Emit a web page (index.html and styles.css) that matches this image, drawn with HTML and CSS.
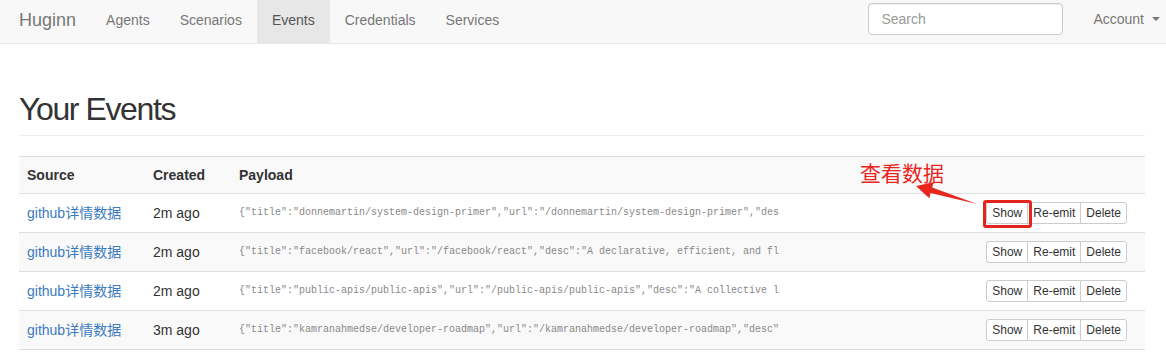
FILE: index.html
```html
<!DOCTYPE html>
<html lang="en">
<head>
    <meta charset="UTF-8">
    <meta name="viewport" content="width=device-width, initial-scale=1.0">
    <title>Huginn - Your Events</title>
    <link rel="stylesheet" href="styles.css">
</head>
<body>

<nav class="navbar">
    <a href="#" class="brand">Huginn</a>
    <ul class="nav-links">
        <li><a href="#">Agents</a></li>
        <li><a href="#">Scenarios</a></li>
        <li class="active"><a href="#">Events</a></li>
        <li><a href="#">Credentials</a></li>
        <li><a href="#">Services</a></li>
    </ul>
    <form class="search-form">
        <input type="text" class="search-input" placeholder="Search">
    </form>
    <a href="#" class="account">Account <span class="caret"></span></a>
</nav>

<div class="container">
    <div class="page-header">
        <h1>Your Events</h1>
    </div>

    <table class="events">
        <thead>
        <tr>
            <th class="col-source">Source</th>
            <th class="col-created">Created</th>
            <th>Payload</th>
            <th></th>
        </tr>
        </thead>
        <tbody>
        <tr>
            <td><a href="#" class="source">github详情数据</a></td>
            <td>2m ago</td>
            <td class="payload">{"title":"donnemartin/system-design-primer","url":"/donnemartin/system-design-primer","des</td>
            <td class="actions">
                <div class="btn-group"><a href="#" class="btn">Show</a><a href="#" class="btn">Re-emit</a><a href="#" class="btn">Delete</a></div>
            </td>
        </tr>
        <tr>
            <td><a href="#" class="source">github详情数据</a></td>
            <td>2m ago</td>
            <td class="payload">{"title":"facebook/react","url":"/facebook/react","desc":"A declarative, efficient, and fl</td>
            <td class="actions">
                <div class="btn-group"><a href="#" class="btn">Show</a><a href="#" class="btn">Re-emit</a><a href="#" class="btn">Delete</a></div>
            </td>
        </tr>
        <tr>
            <td><a href="#" class="source">github详情数据</a></td>
            <td>2m ago</td>
            <td class="payload">{"title":"public-apis/public-apis","url":"/public-apis/public-apis","desc":"A collective l</td>
            <td class="actions">
                <div class="btn-group"><a href="#" class="btn">Show</a><a href="#" class="btn">Re-emit</a><a href="#" class="btn">Delete</a></div>
            </td>
        </tr>
        <tr>
            <td><a href="#" class="source">github详情数据</a></td>
            <td>3m ago</td>
            <td class="payload">{"title":"kamranahmedse/developer-roadmap","url":"/kamranahmedse/developer-roadmap","desc"</td>
            <td class="actions">
                <div class="btn-group"><a href="#" class="btn">Show</a><a href="#" class="btn">Re-emit</a><a href="#" class="btn">Delete</a></div>
            </td>
        </tr>
        </tbody>
    </table>
</div>

<!-- screenshot annotation -->
<div class="note-text">查看数据</div>
<svg class="note-arrow" width="80" height="40" viewBox="900 170 80 40">
    <polygon points="916,186 933.5,182.3 932.2,187.6 977,204 930.6,193 929.3,198.3" fill="#e8261e"/>
</svg>
<div class="note-box"></div>

</body>
</html>
```

FILE: styles.css
```css
body {
    font-family: "Liberation Sans", Arial, "Noto Sans CJK SC", sans-serif;
    font-size: 14px;
    margin: 0;
    padding: 0;
    color: #333;
    background: #fff;
    position: relative;
}
a {
    text-decoration: none;
}
.navbar {
    display: flex;
    align-items: stretch;
    height: 43px;
    padding-left: 4px;
    background-color: #f8f8f8;
    border-bottom: 1px solid #e7e7e7;
}
.brand {
    padding: 10px 15px 0;
    font-size: 18px;
    line-height: 20px;
    color: #777;
}
.nav-links {
    display: flex;
    list-style: none;
    margin: 0;
    padding: 0;
}
.nav-links a {
    display: block;
    padding: 10px 15px 13px;
    line-height: 20px;
    color: #777;
}
.nav-links .active a {
    background-color: #e7e7e7;
    color: #555;
}
.search-form {
    margin: 3px 0 0 auto;
}
.search-input {
    box-sizing: border-box;
    width: 195px;
    height: 32px;
    padding: 6px 12px;
    border: 1px solid #ccc;
    border-radius: 4px;
    background: #fff;
    font-family: inherit;
    font-size: 14px;
    color: #555;
    box-shadow: inset 0 1px 1px rgba(0, 0, 0, 0.075);
}
.search-input::placeholder {
    color: #999;
}
.account {
    display: flex;
    align-items: center;
    padding: 0 6px 5px 30px;
    color: #777;
}
.caret {
    display: inline-block;
    width: 0;
    height: 0;
    margin-left: 8px;
    border-top: 4px solid #777;
    border-left: 4px solid transparent;
    border-right: 4px solid transparent;
}
.container {
    padding: 0 21px 0 19px;
}
.page-header {
    margin: 48px 0 20px;
    padding-bottom: 8px;
    border-bottom: 1px solid #eee;
}
.page-header h1 {
    margin: 0;
    font-size: 32px;
    font-weight: 400;
    line-height: 35px;
    letter-spacing: -1.4px;
    color: #333;
}
.events {
    width: 100%;
    border-collapse: collapse;
    border-spacing: 0;
    font-size: 14px;
}
.events th {
    padding: 8px;
    line-height: 20px;
    text-align: left;
    font-weight: bold;
    background-color: #f9f9f9;
    border-top: 1px solid #ddd;
}
.events .col-source {
    width: 110px;
}
.events .col-created {
    width: 70px;
}
.events td {
    padding: 8px;
    line-height: 20px;
    border-top: 1px solid #ddd;
    white-space: nowrap;
    vertical-align: middle;
}
.events tbody tr:nth-child(even) {
    background-color: #f9f9f9;
}
.events tbody tr:last-child td {
    border-bottom: 1px solid #ddd;
}
.events .source {
    color: #3b7bc0;
}
.events .payload {
    font-family: "Liberation Mono", "DejaVu Sans Mono", monospace;
    font-size: 10px;
    color: #888;
}
.events .actions {
    padding-right: 18px;
}
.btn-group {
    display: flex;
    justify-content: flex-end;
}
.btn-group .btn {
    display: block;
    padding: 0 5px;
    font-size: 12px;
    line-height: 20px;
    color: #333;
    background: #fff;
    border: 1px solid #ccc;
    margin-left: -1px;
}
.btn-group .btn:first-child {
    margin-left: 0;
    border-radius: 3px 0 0 3px;
}
.btn-group .btn:last-child {
    border-radius: 0 3px 3px 0;
}
.note-text {
    position: absolute;
    left: 860px;
    top: 157px;
    font-family: "Noto Sans CJK SC", sans-serif;
    font-size: 21px;
    line-height: 30px;
    color: #e8261e;
}
.note-arrow {
    position: absolute;
    left: 900px;
    top: 170px;
}
.note-box {
    position: absolute;
    left: 983px;
    top: 200px;
    width: 43px;
    height: 22px;
    border: 3px solid #e3241c;
    border-radius: 3px;
}
```
